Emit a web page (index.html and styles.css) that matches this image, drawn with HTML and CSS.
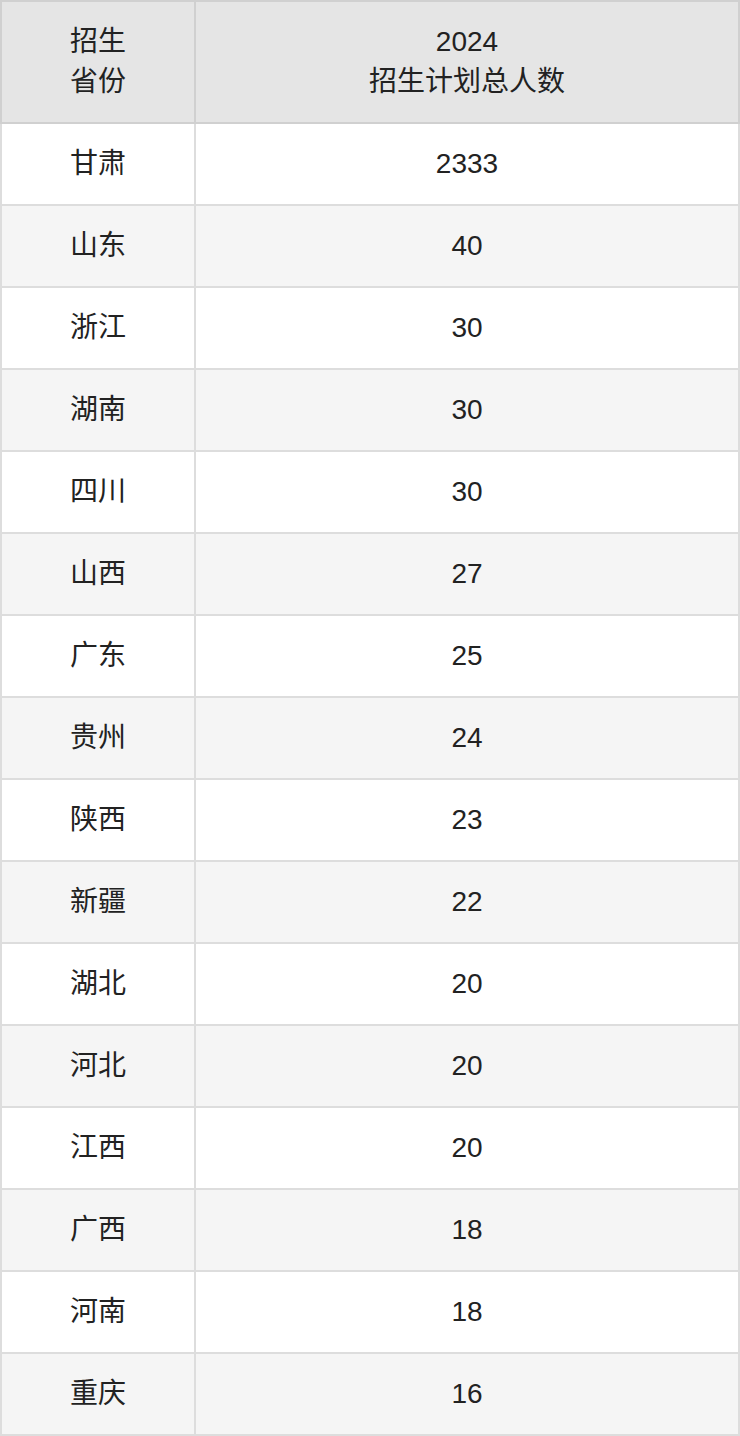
FILE: index.html
```html
<!DOCTYPE html>
<html lang="zh-CN">
<head>
<meta charset="utf-8">
<link rel="stylesheet" href="styles.css">
</head>
<body>
<table class="plan">
  <thead>
    <tr><th class="prov">招生<br>省份</th><th class="num">2024<br>招生计划总人数</th></tr>
  </thead>
  <tbody>
    <tr><td>甘肃</td><td>2333</td></tr>
    <tr><td>山东</td><td>40</td></tr>
    <tr><td>浙江</td><td>30</td></tr>
    <tr><td>湖南</td><td>30</td></tr>
    <tr><td>四川</td><td>30</td></tr>
    <tr><td>山西</td><td>27</td></tr>
    <tr><td>广东</td><td>25</td></tr>
    <tr><td>贵州</td><td>24</td></tr>
    <tr><td>陕西</td><td>23</td></tr>
    <tr><td>新疆</td><td>22</td></tr>
    <tr><td>湖北</td><td>20</td></tr>
    <tr><td>河北</td><td>20</td></tr>
    <tr><td>江西</td><td>20</td></tr>
    <tr><td>广西</td><td>18</td></tr>
    <tr><td>河南</td><td>18</td></tr>
    <tr><td>重庆</td><td>16</td></tr>
  </tbody>
</table>
</body>
</html>
```

FILE: styles.css
```css
html, body {
  margin: 0;
  padding: 0;
  background: #ffffff;
}
.plan {
  width: 740px;
  border-collapse: collapse;
  table-layout: fixed;
  font-family: "Liberation Sans", "Noto Sans CJK SC", sans-serif;
  font-size: 28px;
  color: #222222;
}
.plan th, .plan td {
  text-align: center;
  vertical-align: middle;
  padding: 0;
  font-weight: normal;
}
.plan th {
  background: #e5e5e5;
  border: 2px solid #d0d0d0;
  height: 120px;
  line-height: 40px;
}
.plan .prov { width: 192px; }
.plan td {
  height: 80px;
  line-height: 40px;
  border: 2px solid #dddddd;
}
.plan tbody tr:nth-child(odd) td { background: #ffffff; }
.plan tbody tr:nth-child(even) td { background: #f5f5f5; }
```
